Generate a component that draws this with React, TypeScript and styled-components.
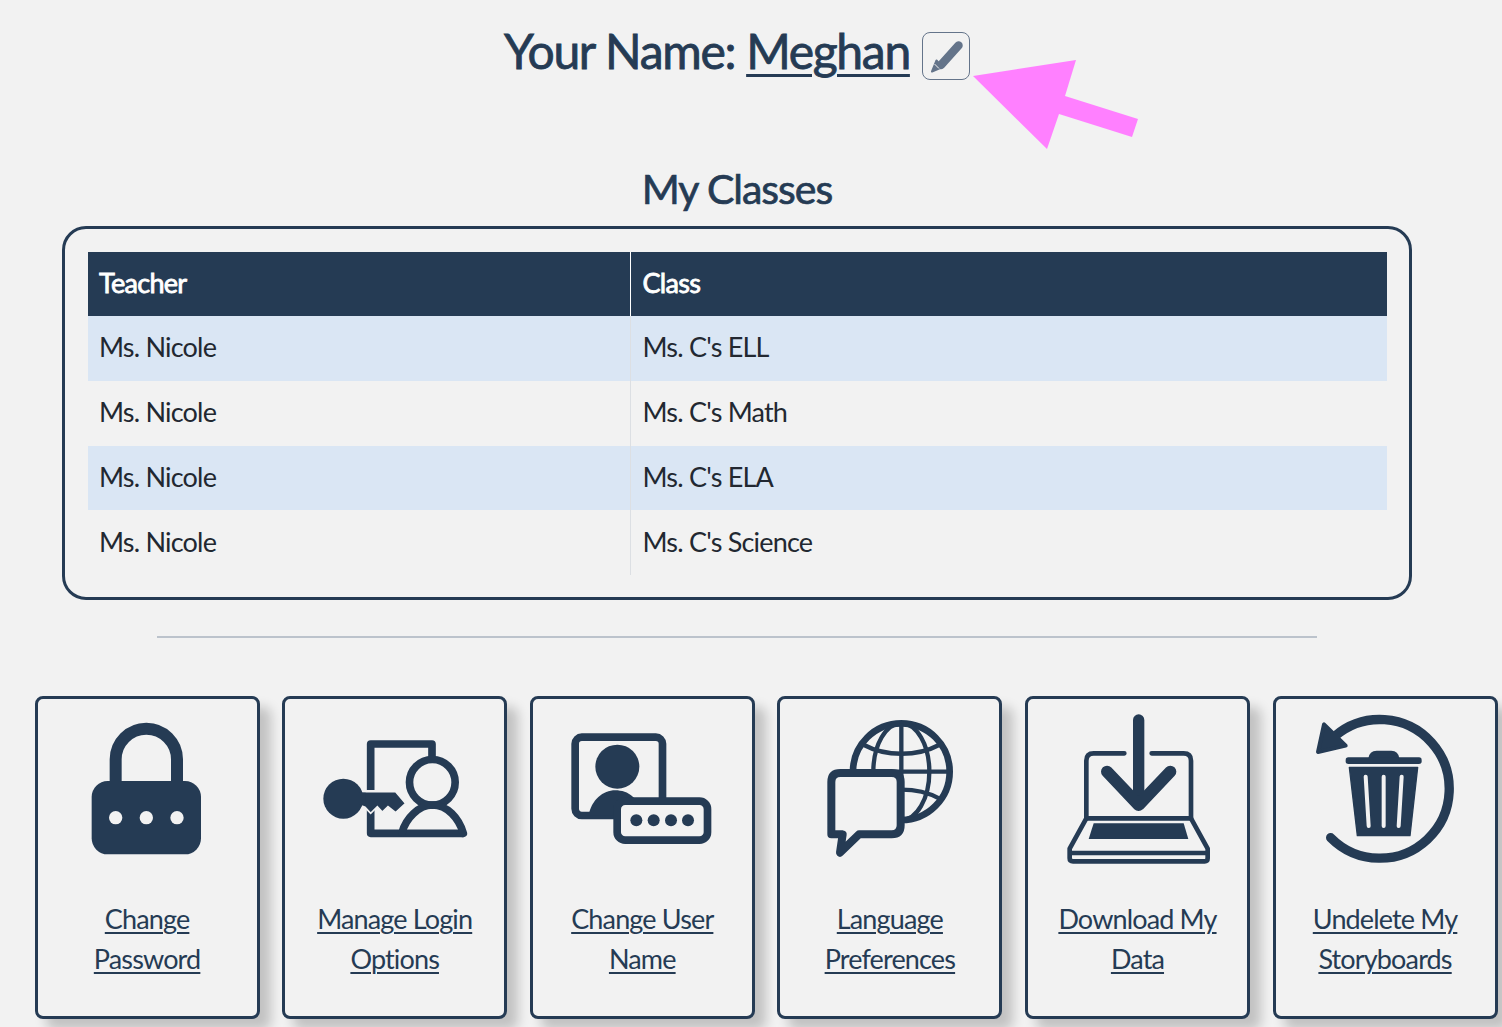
import React from 'react'
import styled, { createGlobalStyle } from 'styled-components'

const navy = '#253b54'
const paper = '#f2f2f2'

const Global = createGlobalStyle`
html, body { margin: 0; padding: 0; background: ${paper}; }
body { font-family: Lato, "Open Sans", sans-serif; color: ${navy}; }
`

const rows = [
  ['Ms. Nicole', "Ms. C's ELL"],
  ['Ms. Nicole', "Ms. C's Math"],
  ['Ms. Nicole', "Ms. C's ELA"],
  ['Ms. Nicole', "Ms. C's Science"],
]

const LockIcon = () => (
  <Icon viewBox="112 60 480 480">
    <path d="M258 285V208a92 92 0 0 1 184 0V285" fill="none" stroke={navy} strokeWidth="36" />
    <rect x="186" y="273" width="328" height="220" rx="48" fill={navy} />
    <circle cx="258" cy="383" r="20" fill={paper} />
    <circle cx="350" cy="383" r="20" fill={paper} />
    <circle cx="442" cy="383" r="20" fill={paper} />
  </Icon>
)

const LoginIcon = () => (
  <Icon viewBox="853 60 480 480">
    <path d="M1020 300V162H1204V210" fill="none" stroke={navy} strokeWidth="23" strokeLinejoin="round" />
    <path d="M1020 360V430H1298" fill="none" stroke={navy} strokeWidth="23" strokeLinejoin="round" />
    <circle cx="1205" cy="277" r="68.5" fill="none" stroke={navy} strokeWidth="23" />
    <path d="M1114 428C1125 385 1165 345 1205 345C1250 345 1285 385 1298 430" fill="none" stroke={navy} strokeWidth="23" strokeLinecap="round" />
    <path d="M985 305H1095L1125 340L1095 368L1072 350L1055 366L1040 350L1020 370L1003 352L985 345Z" fill={navy} stroke={paper} strokeWidth="5" />
    <circle cx="938" cy="326" r="60" fill={navy} />
    <rect x="985" y="308" width="20" height="36" fill={navy} />
  </Icon>
)

const UserIcon = () => (
  <Icon viewBox="112 60 480 480">
    <rect x="151.500" y="141.500" width="262" height="235" rx="20" fill="none" stroke={navy} strokeWidth="23" />
    <circle cx="278" cy="230" r="66" fill={navy} />
    <path d="M192 376C200 330 235 301 272 301C310 301 345 325 352 376Z" fill={navy} />
    <rect x="277.500" y="333.500" width="271" height="117" rx="24" fill={paper} stroke={navy} strokeWidth="23" />
    <circle cx="335" cy="391" r="18" fill={navy} />
    <circle cx="387" cy="391" r="18" fill={navy} />
    <circle cx="439" cy="391" r="18" fill={navy} />
    <circle cx="490" cy="391" r="18" fill={navy} />
  </Icon>
)

const GlobeIcon = () => (
  <Icon viewBox="853 60 480 480">
    <circle cx="1127" cy="245" r="145" fill="none" stroke={navy} strokeWidth="20" />
    <ellipse cx="1127" cy="245" rx="84" ry="145" fill="none" stroke={navy} strokeWidth="13" />
    <path d="M1127 100V390M982 245H1272" stroke={navy} strokeWidth="13" />
    <path d="M1015 165C1080 200 1175 200 1240 165M1015 325C1080 290 1175 290 1240 325" fill="none" stroke={navy} strokeWidth="13" />
    <path d="M944 249H1098Q1125 249 1125 276V406Q1125 433 1098 433H1000L943 488L951 433H917V276Q917 249 944 249Z" fill={paper} stroke={navy} strokeWidth="24" strokeLinejoin="round" />
  </Icon>
)

const LaptopIcon = () => (
  <Icon viewBox="112 60 480 480">
    <path d="M314 190H222Q200 190 200 212V385H514V212Q514 190 492 190H396" fill="none" stroke={navy} strokeWidth="14" strokeLinecap="round" />
    <path d="M200 385L150 476V505Q150 514 160 514H555Q564 514 564 505V476L514 385" fill="none" stroke={navy} strokeWidth="14" strokeLinejoin="round" />
    <path d="M150 489H564" stroke={navy} strokeWidth="13" />
    <path d="M222 400H492L506 447H207Z" fill={navy} />
    <path d="M357 90V340" stroke={navy} strokeWidth="34" strokeLinecap="round" />
    <path d="M262 245L357 345L452 245" fill="none" stroke={navy} strokeWidth="36" strokeLinecap="round" strokeLinejoin="round" />
  </Icon>
)

const TrashIcon = () => (
  <Icon viewBox="855 60 480 480">
    <path d="M932 443A208 208 0 1 0 945 138" fill="none" stroke={navy} strokeWidth="28" strokeLinecap="round" />
    <path d="M912 103L894 186L977 167Z" fill={navy} stroke={navy} strokeWidth="12" strokeLinejoin="round" />
    <path d="M1045 205Q1048 182 1070 182H1114Q1135 182 1138 205Z" fill={navy} />
    <rect x="977" y="202" width="228" height="20" rx="8" fill={navy} />
    <path d="M988 232H1193L1170 437H1012Z" fill={navy} stroke={navy} strokeWidth="4" strokeLinejoin="round" />
    <path d="M1037 260L1046 408M1091 260V408M1145 260L1136 408" stroke={paper} strokeWidth="12" strokeLinecap="round" />
  </Icon>
)

const tiles = [
  { top: 'Change', bottom: 'Password', icon: <LockIcon /> },
  { top: 'Manage Login', bottom: 'Options', icon: <LoginIcon /> },
  { top: 'Change User', bottom: 'Name', icon: <UserIcon /> },
  { top: 'Language', bottom: 'Preferences', icon: <GlobeIcon /> },
  { top: 'Download My', bottom: 'Data', icon: <LaptopIcon /> },
  { top: 'Undelete My', bottom: 'Storyboards', icon: <TrashIcon /> },
]

const App = () => {
  return (
    <Page>
      <Global />
      <NameRow>
        <span>
          Your Name: <NameLink href="#">Meghan</NameLink>
        </span>
        <EditButton aria-label="Edit name">
          <svg width="46" height="46" viewBox="0 0 46 46">
            <path d="M35.500 12.500L18 32" stroke="#64748a" strokeWidth="8.500" strokeLinecap="round" />
            <path d="M13.500 27.500L19.500 34L9 38.500Z" fill="#64748a" stroke="#64748a" strokeWidth="2" strokeLinejoin="round" />
            <path d="M11.500 31L16 35.500" stroke={paper} strokeWidth="1" />
          </svg>
        </EditButton>
      </NameRow>
      <Pointer width="170" height="95" viewBox="970 57 170 95">
        <polygon points="973,76 1076,60 1065,96 1138,119 1132,137 1059,114 1047,149" fill="#ff80ff" />
      </Pointer>
      <Heading>My Classes</Heading>
      <TableBox>
        <ClassTable>
          <thead>
            <tr>
              <HeadCell $first>Teacher</HeadCell>
              <HeadCell>Class</HeadCell>
            </tr>
          </thead>
          <tbody>
            {rows.map((r, i) => (
              <BodyRow key={i} $shaded={i % 2 === 0}>
                <BodyCell $first>{r[0]}</BodyCell>
                <BodyCell>{r[1]}</BodyCell>
              </BodyRow>
            ))}
          </tbody>
        </ClassTable>
      </TableBox>
      <Rule />
      <TileRow>
        {tiles.map((t) => (
          <Tile key={t.top}>
            {t.icon}
            <TileLink href="#">
              {t.top}
              <br />
              {t.bottom}
            </TileLink>
          </Tile>
        ))}
      </TileRow>
    </Page>
  )
}

export default App

const Page = styled.div`
position: relative;
width: 1502px;
height: 1027px;
overflow: hidden;
background: ${paper};
`
const NameRow = styled.h1`
width: 1474px;
margin: 0;
padding-top: 22px;
display: flex;
justify-content: center;
align-items: center;
gap: 12px;
font-size: 48px;
line-height: 58px;
font-weight: 400;
letter-spacing: -1.3px;
white-space: pre;
-webkit-text-stroke: 0.8px ${navy};
`
const NameLink = styled.a`
color: ${navy};
text-decoration: underline;
text-decoration-thickness: 3px;
text-underline-offset: 5px;
`
const EditButton = styled.button`
box-sizing: border-box;
width: 48px;
height: 48px;
margin-top: 10px;
padding: 0;
background: transparent;
border: 1px solid #64748a;
border-radius: 8px;
`
const Pointer = styled.svg`
position: absolute;
left: 970px;
top: 57px;
`
const Heading = styled.h2`
width: 1474px;
margin: 0;
padding-top: 84px;
text-align: center;
font-size: 41px;
line-height: 50px;
font-weight: 400;
letter-spacing: -1px;
-webkit-text-stroke: 0.7px ${navy};
`
const TableBox = styled.div`
box-sizing: border-box;
width: 1350px;
height: 374px;
margin: 12px 0 0 62px;
padding: 23px;
border: 3px solid ${navy};
border-radius: 24px;
`
const ClassTable = styled.table`
width: 1299px;
border-collapse: collapse;
table-layout: fixed;
`
const HeadCell = styled.th<{ $first?: boolean }>`
box-sizing: border-box;
height: 64px;
padding: 0 ${(p) => (p.$first ? '11px' : '12px')} 3px;
width: ${(p) => (p.$first ? '542px' : 'auto')};
background: ${navy};
color: #fff;
text-align: left;
font-size: 27px;
font-weight: 400;
letter-spacing: -0.7px;
-webkit-text-stroke: 0.8px #fff;
border-right: ${(p) => (p.$first ? '1px solid #fff' : 'none')};
`
const BodyRow = styled.tr<{ $shaded: boolean }>`
background: ${(p) => (p.$shaded ? '#dae6f4' : 'transparent')};
`
const BodyCell = styled.td<{ $first?: boolean }>`
box-sizing: border-box;
height: 64.750px;
padding: 0 ${(p) => (p.$first ? '11px' : '12px')} 3px;
font-size: 27px;
letter-spacing: -0.8px;
color: #222831;
border-right: ${(p) => (p.$first ? '1px solid #dcdfe3' : 'none')};
`
const Rule = styled.hr`
width: 1160px;
height: 2px;
margin: 36px 0 0 157px;
border: none;
background: #bcc3cc;
`
const TileRow = styled.div`
display: flex;
gap: 22.600px;
margin: 58px 0 0 34.600px;
`
const Tile = styled.div`
box-sizing: border-box;
flex: none;
width: 225px;
height: 323px;
display: flex;
flex-direction: column;
align-items: center;
background: ${paper};
border: 3px solid ${navy};
border-radius: 8px;
box-shadow: 11px 11px 12px rgba(0, 0, 0, 0.2);
`
const Icon = styled.svg`
flex: none;
width: 160px;
height: 160px;
margin-top: 11px;
`
const TileLink = styled.a`
margin-top: 29px;
color: ${navy};
font-size: 27px;
line-height: 40px;
letter-spacing: -0.85px;
text-align: center;
white-space: nowrap;
text-decoration: underline;
text-decoration-thickness: 1.500px;
text-underline-offset: 3px;
`
